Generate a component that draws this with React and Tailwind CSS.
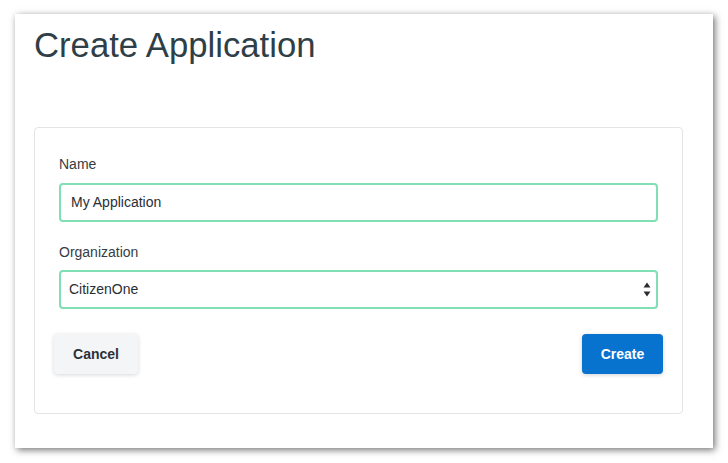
import React from "react";

export default function App() {
  return (
    <div className="w-[728px] h-[463px] bg-white pt-[14px] pl-[15px] overflow-hidden" style={{ fontFamily: '"Liberation Sans", Arial, sans-serif' }}>
      <div className="w-[698px] h-[434px] bg-white shadow-[2px_2px_7px_rgba(0,0,0,0.55)] pt-[11px] px-[19px]">
        <h1 className="text-[34.7px] leading-[40px] text-[#2f3f48] font-normal">Create Application</h1>
        <div className="mt-[62px] w-[649px] border border-[#e2e4e7] rounded-[4px] pt-[26px] pb-[39px] px-[24px]">
          <label className="block text-[14px] leading-[20px] text-[#363d44]">Name</label>
          <div className="mt-[9px] h-[39px] border-[2px] border-[#80dfb4] rounded-[4px] flex items-center pl-[10px] text-[14px] text-[#2a2e33]">
            My Application
          </div>
          <label className="block mt-[20px] text-[14px] leading-[20px] text-[#363d44]">Organization</label>
          <div className="mt-[8px] h-[39px] border-[2px] border-[#80dfb4] rounded-[4px] flex items-center justify-between pl-[8px] pr-[4px] text-[14px] text-[#2a2e33]">
            <span>CitizenOne</span>
            <svg width="8" height="15" viewBox="0 0 8 15" className="mr-[1px]">
              <path d="M4 0.5 L7.5 5.5 L0.5 5.5 Z" fill="#2a2e33" />
              <path d="M4 14.5 L7.5 9.5 L0.5 9.5 Z" fill="#2a2e33" />
            </svg>
          </div>
          <div className="mt-[25px] -mx-[5px] flex justify-between">
            <button className="w-[84px] h-[40px] rounded-[4px] bg-[#f4f5f7] shadow-[0_1px_4px_rgba(0,0,0,0.16)] text-[14px] font-bold text-[#2c3238]">
              Cancel
            </button>
            <button className="w-[81px] h-[40px] rounded-[4px] bg-[#0873cf] shadow-[0_1px_4px_rgba(0,0,0,0.18)] text-[14px] font-bold text-white">
              Create
            </button>
          </div>
        </div>
      </div>
    </div>
  );
}
